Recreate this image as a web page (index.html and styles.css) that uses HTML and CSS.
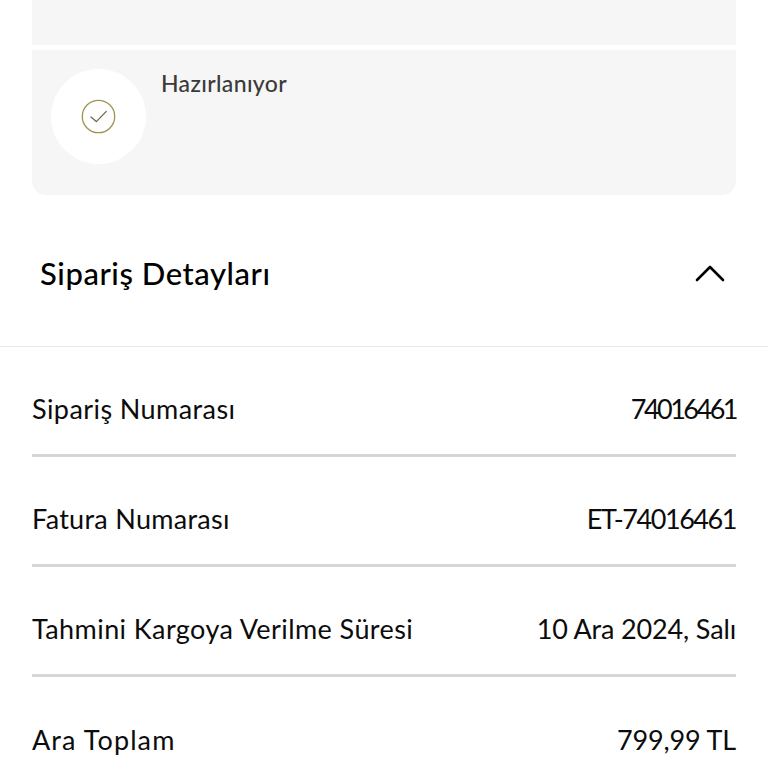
FILE: index.html
```html
<!DOCTYPE html>
<html lang="tr">
<head>
<meta charset="utf-8">
<title>Sipariş Detayları</title>
<link rel="stylesheet" href="styles.css">
</head>
<body>
<div class="status-list">
  <div class="card card-top"></div>
  <div class="card card-step">
    <div class="step-circle">
      <svg class="step-icon" width="35" height="35" viewBox="0 0 35 35" fill="none">
        <circle cx="17.5" cy="17.5" r="16.2" stroke="#a3914f" stroke-width="1.3"/>
        <path d="M10 18l5.3 4.6L25.3 12.4" stroke="#6f6a4c" stroke-width="1.3" stroke-linecap="round" stroke-linejoin="round"/>
      </svg>
    </div>
    <div class="step-label">Hazırlanıyor</div>
  </div>
</div>
<div class="section-head">
  <h2 class="section-title">Sipariş Detayları</h2>
  <svg class="chevron" width="30" height="18" viewBox="0 0 30 18" fill="none">
    <path d="M2 16L15 3l13 13" stroke="#000" stroke-width="2.6" stroke-linecap="round" stroke-linejoin="round"/>
  </svg>
</div>
<div class="rows">
  <div class="row"><span class="key">Sipariş Numarası</span><span class="val-num">74016461</span></div>
  <div class="row"><span class="key key-tight">Fatura Numarası</span><span class="val-code">ET-74016461</span></div>
  <div class="row"><span class="key">Tahmini Kargoya Verilme Süresi</span><span class="val">10 Ara 2024, Salı</span></div>
  <div class="row"><span class="key key-wide">Ara Toplam</span><span class="val">799,99 TL</span></div>
</div>
</body>
</html>
```
FILE: styles.css
```css
* { box-sizing: border-box; }
html, body { margin: 0; padding: 0; }
body {
  width: 768px;
  height: 768px;
  overflow: hidden;
  background: #fff;
  font-family: "Lato", "Noto Sans", sans-serif;
  color: #0c0c0c;
}
.status-list {
  display: flex;
  flex-direction: column;
  gap: 5px;
  padding: 0 32px;
}
.card { background: #f6f6f6; }
.card-top { height: 45px; }
.card-step {
  height: 145px;
  border-radius: 0 0 14px 14px;
  display: flex;
  align-items: flex-start;
  padding: 19px 0 0 19px;
  gap: 15px;
}
.step-circle {
  width: 95px;
  height: 95px;
  border-radius: 50%;
  background: #fff;
  display: flex;
  align-items: center;
  justify-content: center;
  flex: none;
}
.step-label {
  font-size: 23px;
  font-weight: 500;
  line-height: 28px;
  letter-spacing: 0.35px;
  color: #3a3a3a;
}
.section-head {
  display: flex;
  align-items: center;
  justify-content: space-between;
  height: 152px;
  padding: 5px 43px 0 40px;
  border-bottom: 1px solid #ebebeb;
}
.section-title {
  margin: 0;
  font-size: 31px;
  font-weight: 500;
  letter-spacing: 0.55px;
  color: #000;
}
.rows {
  display: flex;
  flex-direction: column;
  padding: 0 32px;
}
.row {
  display: flex;
  justify-content: space-between;
  align-items: center;
  height: 110px;
  flex: none;
  padding-top: 15px;
  font-size: 27px;
  border-bottom: 3px solid #d6d6d6;
}
.row:last-child { border-bottom: 0; }
.key { letter-spacing: 0.42px; }
.key-tight { letter-spacing: 0.28px; }
.key-wide { letter-spacing: 1.1px; }
.val-num { letter-spacing: -2.5px; }
.val-code { letter-spacing: -1.45px; }
.val { letter-spacing: -0.15px; }
```
